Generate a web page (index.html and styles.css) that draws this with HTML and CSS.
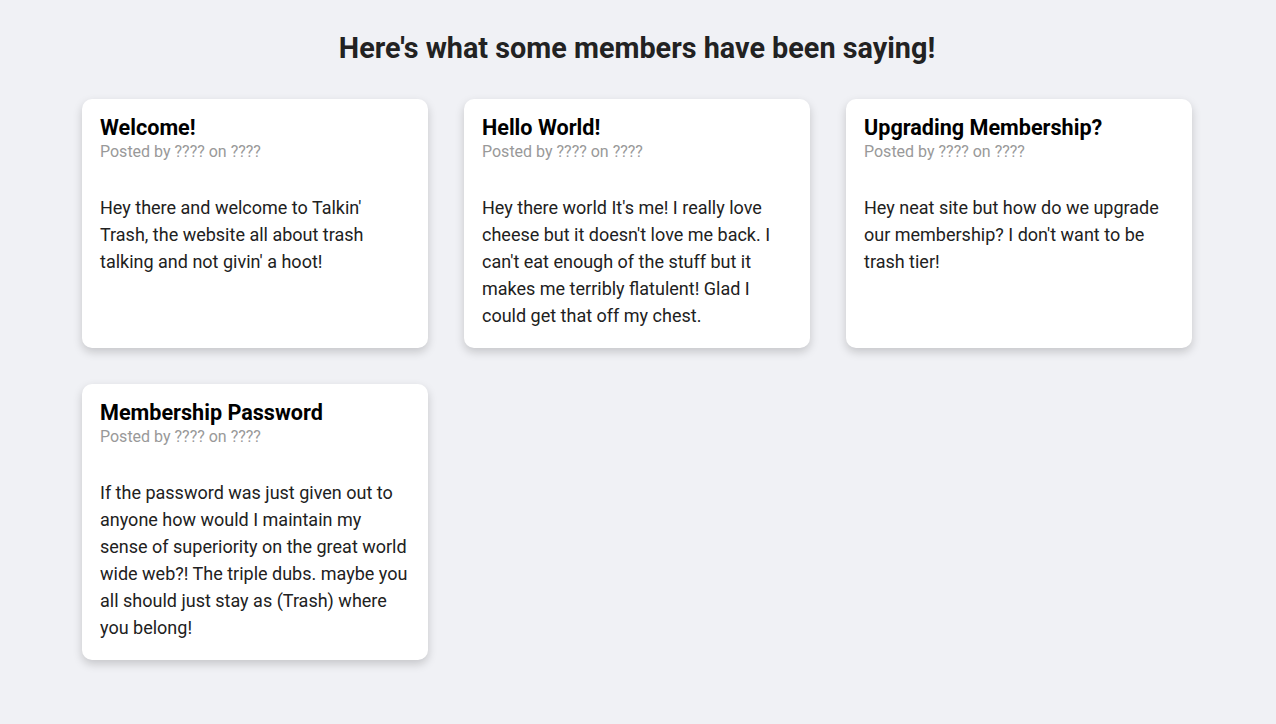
FILE: index.html
```html
<!DOCTYPE html>
<html lang="en">
<head>
<meta charset="utf-8">
<title>Talkin' Trash</title>
<link rel="stylesheet" href="styles.css">
</head>
<body>
<main class="page">
  <h1 class="page-title">Here's what some members have been saying!</h1>
  <section class="posts">
    <article class="post">
      <h2 class="post-title">Welcome!</h2>
      <div class="post-meta">Posted by ???? on ????</div>
      <p class="post-body">Hey there and welcome to Talkin' Trash, the website all about trash talking and not givin' a hoot!</p>
    </article>
    <article class="post">
      <h2 class="post-title">Hello World!</h2>
      <div class="post-meta">Posted by ???? on ????</div>
      <p class="post-body">Hey there world It's me! I really love cheese but it doesn't love me back. I can't eat enough of the stuff but it makes me terribly flatulent! Glad I could get that off my chest.</p>
    </article>
    <article class="post">
      <h2 class="post-title">Upgrading Membership?</h2>
      <div class="post-meta">Posted by ???? on ????</div>
      <p class="post-body">Hey neat site but how do we upgrade our membership? I don't want to be trash tier!</p>
    </article>
    <article class="post">
      <h2 class="post-title">Membership Password</h2>
      <div class="post-meta">Posted by ???? on ????</div>
      <p class="post-body">If the password was just given out to anyone how would I maintain my sense of superiority on the great world wide web?! The triple dubs. maybe you all should just stay as (Trash) where you belong!</p>
    </article>
  </section>
</main>
</body>
</html>
```

FILE: styles.css
```css
html, body {
  margin: 0;
  padding: 0;
}
body {
  background: #f0f1f5;
  font-family: Roboto, "Liberation Sans", Arial, sans-serif;
  color: #212121;
}
.page {
  padding: 30px 2px 40px 0;
}
.page-title {
  margin: 0;
  text-align: center;
  font-size: 28.8px;
  line-height: 36px;
  font-weight: 700;
  color: #222;
}
.posts {
  width: 1110px;
  margin: 33px auto 0;
  display: grid;
  grid-template-columns: repeat(3, 346px);
  gap: 36px;
}
.post {
  background: #fff;
  border-radius: 10px;
  padding: 16px 18px 19px;
  box-shadow: 0 4px 10px rgba(0, 0, 0, 0.18);
}
.post-title {
  margin: 0;
  font-size: 21.6px;
  line-height: 26px;
  font-weight: 700;
  color: #000;
}
.post-meta {
  font-size: 16px;
  line-height: 22px;
  color: #999;
}
.post-body {
  margin: 31px 0 0;
  font-size: 18px;
  line-height: 27px;
  color: #212121;
}
```
